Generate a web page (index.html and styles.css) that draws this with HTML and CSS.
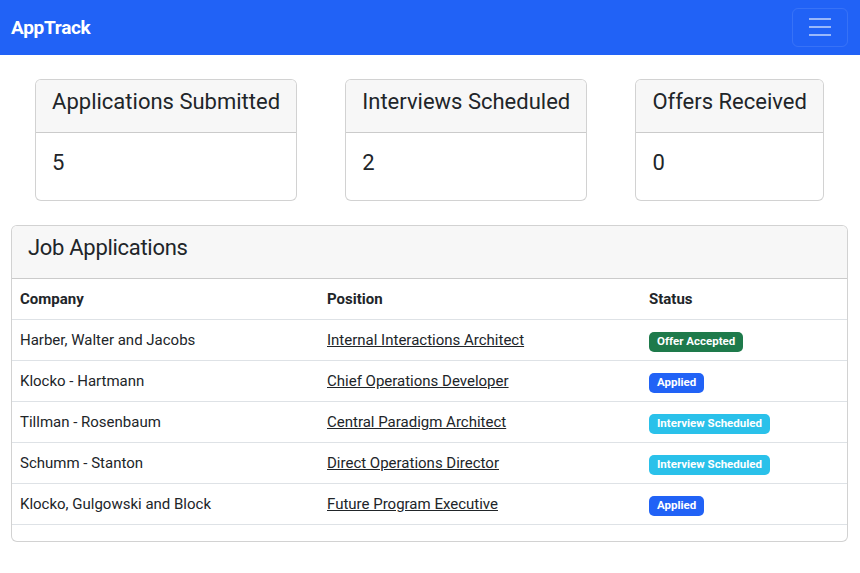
FILE: index.html
```html
<!DOCTYPE html>
<html lang="en">
<head>
<meta charset="utf-8">
<title>AppTrack</title>
<link rel="stylesheet" href="styles.css">
</head>
<body>
<nav class="navbar">
  <a class="brand" href="#">AppTrack</a>
  <button class="toggler" type="button" aria-label="Toggle navigation">
    <svg width="30" height="30" viewBox="0 0 30 30"><path d="M4 7h22M4 15h22M4 23h22" stroke="rgba(255,255,255,0.55)" stroke-width="2" stroke-linecap="butt"/></svg>
  </button>
</nav>
<main class="container">
  <div class="stats">
    <div class="card">
      <div class="card-header"><h4>Applications Submitted</h4></div>
      <div class="card-body"><h4>5</h4></div>
    </div>
    <div class="card">
      <div class="card-header"><h4>Interviews Scheduled</h4></div>
      <div class="card-body"><h4>2</h4></div>
    </div>
    <div class="card">
      <div class="card-header"><h4>Offers Received</h4></div>
      <div class="card-body"><h4>0</h4></div>
    </div>
  </div>
  <div class="card jobs">
    <div class="card-header"><h4>Job Applications</h4></div>
    <table class="table">
      <thead>
        <tr><th>Company</th><th>Position</th><th>Status</th></tr>
      </thead>
      <tbody>
        <tr><td>Harber, Walter and Jacobs</td><td><a href="#">Internal Interactions Architect</a></td><td><span class="badge success">Offer Accepted</span></td></tr>
        <tr><td>Klocko - Hartmann</td><td><a href="#">Chief Operations Developer</a></td><td><span class="badge primary">Applied</span></td></tr>
        <tr><td>Tillman - Rosenbaum</td><td><a href="#">Central Paradigm Architect</a></td><td><span class="badge info">Interview Scheduled</span></td></tr>
        <tr><td>Schumm - Stanton</td><td><a href="#">Direct Operations Director</a></td><td><span class="badge info">Interview Scheduled</span></td></tr>
        <tr><td>Klocko, Gulgowski and Block</td><td><a href="#">Future Program Executive</a></td><td><span class="badge primary">Applied</span></td></tr>
      </tbody>
    </table>
  </div>
</main>
</body>
</html>
```

FILE: styles.css
```css
* { box-sizing: border-box; }
body {
  margin: 0;
  font-family: Roboto, "Liberation Sans", sans-serif;
  font-size: 15px;
  line-height: 24px;
  color: #212529;
  background: #fff;
}
.navbar {
  height: 55px;
  background: #2162f6;
  display: flex;
  align-items: center;
  justify-content: space-between;
  padding: 0 12px 0 11px;
}
.brand {
  color: #fff;
  font-weight: 700;
  font-size: 19px;
  text-decoration: none;
  letter-spacing: -0.3px;
}
.toggler {
  width: 56px;
  height: 39px;
  margin-top: -1px;
  background: transparent;
  border: 1px solid rgba(255,255,255,0.1);
  border-radius: 6px;
  display: flex;
  align-items: center;
  justify-content: center;
  padding: 0;
}
.toggler svg { display: block; width: 30px; height: 30px; }
.container { padding: 24px 12px 0 11px; }
.stats {
  display: flex;
  justify-content: space-around;
  margin-bottom: 24px;
}
.card {
  border: 1px solid rgba(0,0,0,0.175);
  border-radius: 6px;
  background: #fff;
  overflow: hidden;
}
.card-header {
  background: #f7f7f7;
  border-bottom: 1px solid rgba(0,0,0,0.175);
  padding: 8px 16px 8px 16px;
}
.card-body { padding: 16px 16px 15px; }
h4 {
  margin: 0 0 8px;
  font-size: 22px;
  font-weight: 400;
  line-height: 28px;
  letter-spacing: 0;
}
.jobs .card-header h4 { letter-spacing: -0.3px; }
.table {
  width: 100%;
  border-collapse: collapse;
  margin-bottom: 16px;
}
.table th, .table td {
  text-align: left;
  padding: 8px;
  border-bottom: 1px solid #dee2e6;
  vertical-align: top;
}
.table th { font-weight: 700; padding-top: 8px; }
.table th:nth-child(1) { width: 307px; }
.table th:nth-child(2) { width: 322px; }
.table a { color: #212529; text-decoration: underline; }
.badge {
  display: inline-block;
  font-size: 11.5px;
  font-weight: 700;
  line-height: 1;
  color: #fff;
  padding: 4px 8px;
  border-radius: 5px;
  vertical-align: 0;
}
.badge.success { background: #1e7a4b; }
.badge.primary { background: #2162f6; }
.badge.info { background: #2ac1ea; }
```
